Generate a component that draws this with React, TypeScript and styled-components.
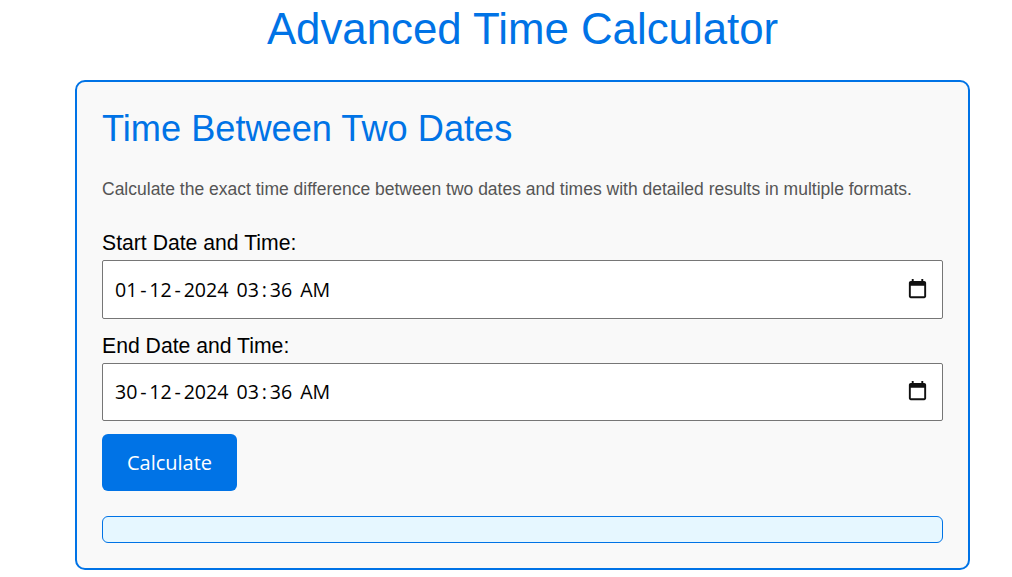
import React from 'react'
import styled, { createGlobalStyle } from 'styled-components'

const GlobalStyle = createGlobalStyle`
  html, body {
    margin: 0;
    padding: 0;
    background: #fff;
    font-family: 'Liberation Sans', Arial, sans-serif;
    overflow: hidden;
  }
`

function CalendarIcon() {
  return (
    <svg width="23" height="23" viewBox="0 0 24 24" aria-hidden="true">
      <path
        fill="#111"
        d="M19 3h-1V1h-2v2H8V1H6v2H5c-1.1 0-2 .9-2 2v14c0 1.1.9 2 2 2h14c1.1 0 2-.9 2-2V5c0-1.1-.9-2-2-2zm0 16H5V8h14v11z"
      />
    </svg>
  )
}

function DateField({ label, value }: { label: string; value: string }) {
  // the browser's date input spaces its separators out, so they get their own span
  const parts = value.split(/([-:])/)

  return (
    <Field>
      <FieldLabel>{label}</FieldLabel>
      <DateBox>
        <DateValue>
          {parts.map((part, idx) =>
            part === '-' || part === ':' ? <Separator key={idx}>{part}</Separator> : <span key={idx}>{part}</span>
          )}
        </DateValue>
        <CalendarIcon />
      </DateBox>
    </Field>
  )
}

export default function App() {
  return (
    <Page>
      <GlobalStyle />
      <PageTitle>Advanced Time Calculator</PageTitle>
      <Card>
        <CardTitle>Time Between Two Dates</CardTitle>
        <Description>
          Calculate the exact time difference between two dates and times with detailed results in multiple formats.
        </Description>
        <DateField label="Start Date and Time:" value="01-12-2024 03:36 AM" />
        <DateField label="End Date and Time:" value="30-12-2024 03:36 AM" />
        <CalculateButton type="button">Calculate</CalculateButton>
        <ResultBox />
      </Card>
    </Page>
  )
}

const Page = styled.div`
  display: flex;
  flex-direction: column;
  width: 895px;
  margin-left: 75px;
`

const PageTitle = styled.h1`
  margin: 3px 0 25px;
  font-size: 43.8px;
  line-height: 52px;
  font-weight: 400;
  text-align: center;
  color: #0073e6;
`

const Card = styled.section`
  display: flex;
  flex-direction: column;
  box-sizing: border-box;
  height: 490px;
  padding: 25px;
  background: #f9f9f9;
  border: 2px solid #0073e6;
  border-radius: 10px;
`

const CardTitle = styled.h2`
  margin: 0 0 26px;
  font-size: 36.2px;
  line-height: 44px;
  font-weight: 400;
  color: #0073e6;
`

const Description = styled.p`
  margin: 0 0 31px;
  font-size: 17.5px;
  line-height: 24px;
  color: #555;
`

const Field = styled.div`
  display: flex;
  flex-direction: column;

  & + & {
    margin-top: 16px;
  }
`

const FieldLabel = styled.label`
  font-size: 21.2px;
  line-height: 22px;
  margin-bottom: 6px;
  color: #000;
`

const DateBox = styled.div`
  display: flex;
  align-items: center;
  justify-content: space-between;
  box-sizing: border-box;
  height: 58.5px;
  padding: 0 13px 0 12px;
  background: #fff;
  border: 1px solid #767676;
  border-radius: 2px;
`

const DateValue = styled.span`
  font-family: 'Open Sans', 'Noto Sans', sans-serif;
  font-size: 19.6px;
  word-spacing: 3px;
  color: #000;
`

const Separator = styled.span`
  padding: 0 2.8px;
`

const CalculateButton = styled.button`
  align-self: flex-start;
  width: 135px;
  height: 57px;
  margin-top: 13px;
  padding: 0;
  background: #0073e6;
  color: #fff;
  border: none;
  border-radius: 6px;
  font-family: 'Open Sans', 'Noto Sans', sans-serif;
  font-size: 20px;
`

const ResultBox = styled.div`
  box-sizing: border-box;
  height: 27px;
  margin-top: 25px;
  background: #e6f7ff;
  border: 1px solid #0073e6;
  border-radius: 6px;
`
